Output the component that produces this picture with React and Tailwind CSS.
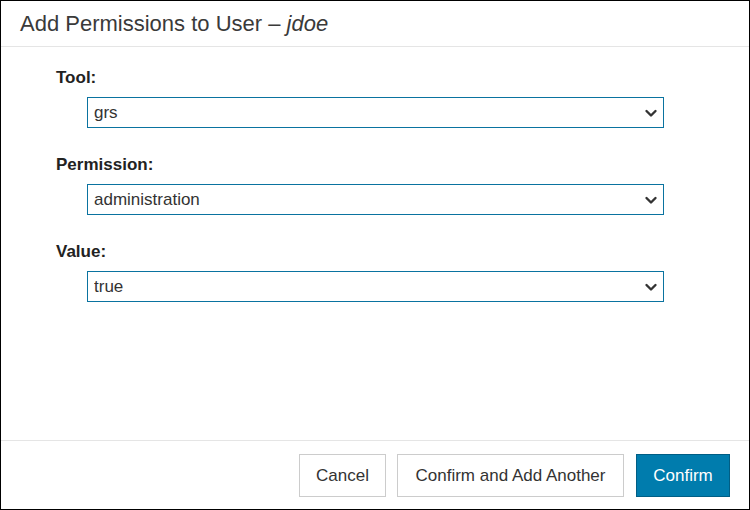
import React, { useState } from "react";

const fields = [
  { id: "tool", label: "Tool:", options: ["grs", "admin", "reports"] },
  { id: "permission", label: "Permission:", options: ["administration", "read", "write"] },
  { id: "value", label: "Value:", options: ["true", "false"] },
];

function Chevron() {
  return (
    <svg
      className="pointer-events-none absolute right-[6px] top-1/2 -translate-y-1/2"
      width="14"
      height="14"
      viewBox="0 0 14 14"
      fill="none"
    >
      <path d="M2.5 5 L7 9.5 L11.5 5" stroke="#333" strokeWidth="2.4" strokeLinecap="round" strokeLinejoin="round" />
    </svg>
  );
}

export default function App() {
  const [values, setValues] = useState({ tool: "grs", permission: "administration", value: "true" });

  return (
    <div
      className="w-[750px] h-[510px] border border-black bg-white flex flex-col text-[#333]"
      style={{ fontFamily: '"Liberation Sans", Arial, sans-serif' }}
    >
      {/* header */}
      <div className="h-[46px] shrink-0 border-b border-[#e5e5e5] flex items-center pl-[19px]">
        <h1 className="text-[22px] leading-none text-[#3a3a3a]">
          Add Permissions to User – <em>jdoe</em>
        </h1>
      </div>

      {/* body */}
      <div className="flex-1 pt-[21px] pl-[55px] pr-[85px]">
        {fields.map((f) => (
          <div key={f.id} className="mb-[27px]">
            <label htmlFor={f.id} className="block text-[17px] leading-[20px] font-bold text-[#222]">
              {f.label}
            </label>
            <div className="relative mt-[9px] ml-[31px]">
              <select
                id={f.id}
                value={values[f.id]}
                onChange={(e) => setValues({ ...values, [f.id]: e.target.value })}
                className="block w-full h-[31px] appearance-none border border-[#0a73a0] bg-white pl-[6px] pr-8 text-[17px] leading-none text-[#333] outline-none"
              >
                {f.options.map((o) => (
                  <option key={o} value={o}>{o}</option>
                ))}
              </select>
              <Chevron />
            </div>
          </div>
        ))}
      </div>

      {/* footer */}
      <div className="shrink-0 border-t border-[#e5e5e5] flex justify-end gap-[11px] pt-[13px] pb-[12px] pr-[19px]">
        <button className="h-[43px] w-[87px] border border-[#cccccc] bg-white text-[17px] text-[#333]">
          Cancel
        </button>
        <button className="h-[43px] w-[227px] border border-[#cccccc] bg-white text-[17px] text-[#333]">
          Confirm and Add Another
        </button>
        <button className="h-[43px] w-[94px] ml-px border border-[#005e85] bg-[#007cad] text-[17px] text-white">
          Confirm
        </button>
      </div>
    </div>
  );
}
